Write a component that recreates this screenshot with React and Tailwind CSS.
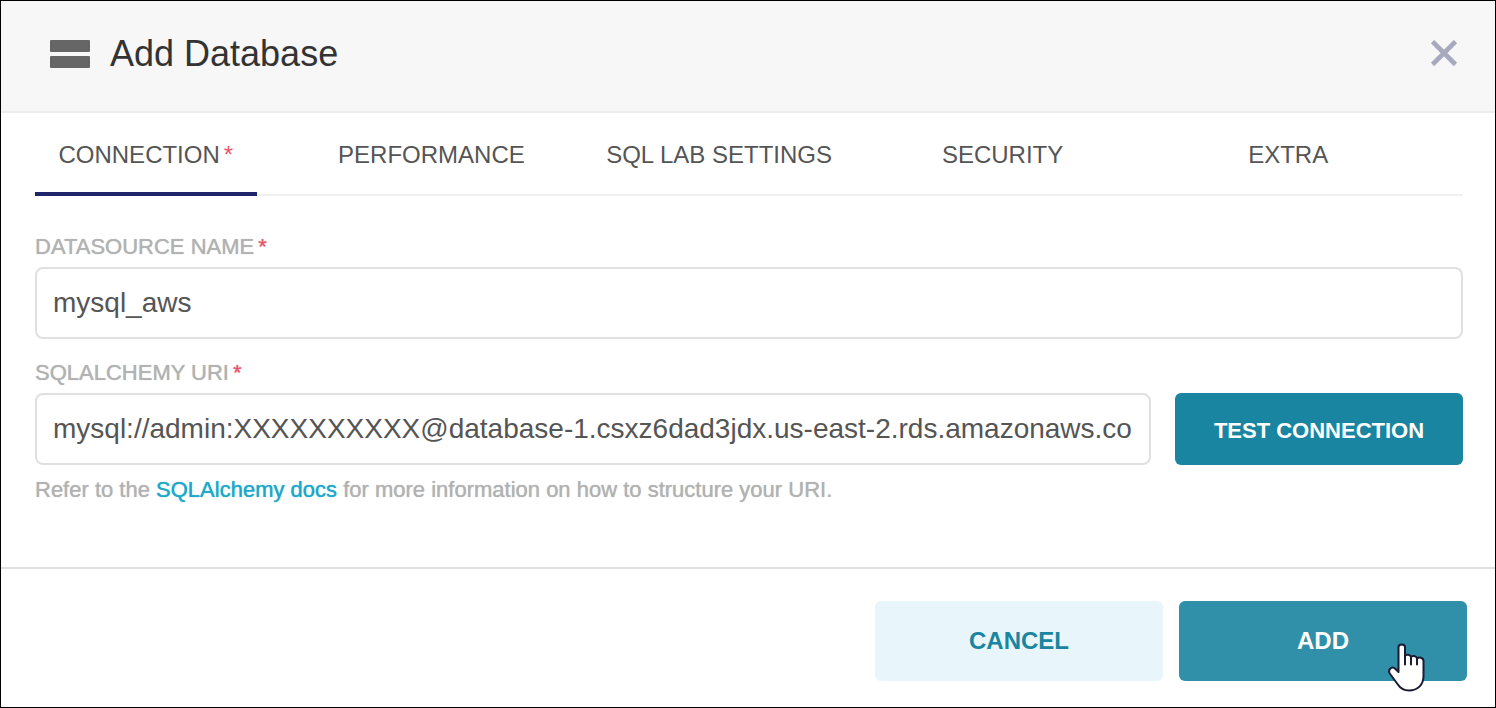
import { useState } from "react";

const TABS = [
  { id: "connection", label: "CONNECTION", required: true },
  { id: "performance", label: "PERFORMANCE" },
  { id: "sqllab", label: "SQL LAB SETTINGS" },
  { id: "security", label: "SECURITY" },
  { id: "extra", label: "EXTRA" },
];

// --- Icons ---
function DatabaseIcon() {
  return (
    <svg width="40" height="28" viewBox="0 0 40 28" fill="#666666" aria-hidden="true">
      <rect width="40" height="12" rx="1" />
      <rect y="16" width="40" height="12" rx="1" />
    </svg>
  );
}

function CloseIcon() {
  return (
    <svg width="28" height="28" viewBox="0 0 28 28" stroke="#a7a9be" strokeWidth="4.6" aria-hidden="true">
      <path d="M2.5 1.5 L25.5 24.5 M25.5 1.5 L2.5 24.5" />
    </svg>
  );
}

function HandPointer() {
  return (
    <svg
      className="pointer-events-none absolute top-[42px] right-[42px]"
      width="37"
      height="49"
      viewBox="0 0 37 49"
      fill="#ffffff"
      stroke="#1b1b33"
      strokeWidth="2"
      strokeLinecap="round"
      strokeLinejoin="round"
      aria-hidden="true"
    >
      <path d="M10.5 29 V4 C10.5 0.5 17 0.5 17 4 V13 C18 11 22.5 11.5 23 14 C24.500 12 28.500 13 29 15.500 C31 13.500 35.500 14.500 35.500 18 V33 C35.500 42 29.500 47.500 21 47.500 C15.500 47.500 12 45 9.500 41 L1.800 30.500 C-0.500 26.500 4 22.500 7.500 26 Z" />
      <path d="M17 13 V21.500 M23 14 V21.500 M29 15.500 V21.500" fill="none" />
    </svg>
  );
}

// --- Form pieces ---
function Required() {
  return <span className="ml-1 text-[#e8576c]">*</span>;
}

function FieldLabel({ htmlFor, children }) {
  return (
    <label
      htmlFor={htmlFor}
      className="mb-2 block text-[22px] leading-6 text-[#b2b2b2] [text-shadow:0_0_1px_currentColor]"
    >
      {children}
      <Required />
    </label>
  );
}

function TextField({ id, value, onChange }) {
  return (
    <input
      id={id}
      type="text"
      value={value}
      onChange={(e) => onChange(e.target.value)}
      className="h-[72px] w-full min-w-0 rounded-lg border-2 border-[#e0e0e0] bg-white px-4 text-[28px] text-[#555555] outline-none"
    />
  );
}

// --- Main App ---
export default function App() {
  const [activeTab, setActiveTab] = useState("connection");
  const [name, setName] = useState("mysql_aws");
  const [uri, setUri] = useState(
    "mysql://admin:XXXXXXXXXX@database-1.csxz6dad3jdx.us-east-2.rds.amazonaws.co"
  );

  return (
    <div
      role="dialog"
      aria-labelledby="dialog-title"
      className="border border-black bg-white font-['Liberation_Sans',Arial,sans-serif]"
    >
      {/* Header */}
      <header className="flex items-center justify-between border-b-2 border-[#ededed] bg-[#f7f7f7] pt-[33px] pr-[37px] pb-[37px] pl-[49px]">
        <div className="flex items-center gap-5">
          <DatabaseIcon />
          <h1 id="dialog-title" className="text-4xl leading-10 text-[#333333]">
            Add Database
          </h1>
        </div>
        <button type="button" aria-label="Close">
          <CloseIcon />
        </button>
      </header>

      {/* Tabs */}
      <div className="pr-8 pl-[34px]">
        <div role="tablist" className="grid h-[83px] grid-cols-5 border-b-2 border-[#f0f0f0]">
          {TABS.map((tab) => (
            <button
              key={tab.id}
              type="button"
              role="tab"
              aria-selected={activeTab === tab.id}
              onClick={() => setActiveTab(tab.id)}
              className={`-mb-[2px] mr-16 border-b-4 pt-1 text-2xl whitespace-nowrap text-[#555555] ${
                activeTab === tab.id ? "border-[#20256b]" : "border-transparent"
              }`}
            >
              {tab.label}
              {tab.required && <Required />}
            </button>
          ))}
        </div>
      </div>

      {/* Connection form */}
      <div className="pt-[39px] pr-8 pb-[65px] pl-[34px]">
        <FieldLabel htmlFor="datasource-name">DATASOURCE NAME</FieldLabel>
        <TextField id="datasource-name" value={name} onChange={setName} />

        <div className="mt-[22px]">
          <FieldLabel htmlFor="sqlalchemy-uri">SQLALCHEMY URI</FieldLabel>
          <div className="flex gap-6">
            <TextField id="sqlalchemy-uri" value={uri} onChange={setUri} />
            <button
              type="button"
              className="w-72 shrink-0 rounded-md bg-[#1a85a0] pt-[2px] text-[22px] font-bold text-white"
            >
              TEST CONNECTION
            </button>
          </div>
        </div>
        <p className="mt-[13px] text-[22px] leading-6 text-[#b2b2b2] [text-shadow:0_0_1px_currentColor]">
          Refer to the{" "}
          <a href="#docs" className="text-[#20a7c9] [text-shadow:0_0_1px_currentColor]">
            SQLAlchemy docs
          </a>{" "}
          for more information on how to structure your URI.
        </p>
      </div>

      {/* Footer */}
      <footer className="flex justify-end gap-4 border-t-2 border-[#e0e0e0] pt-8 pr-7 pb-[26px]">
        <button type="button" className="h-20 w-72 rounded-md bg-[#e8f5fa] text-2xl font-bold text-[#1a85a0]">
          CANCEL
        </button>
        <button type="button" className="relative h-20 w-72 rounded-md bg-[#3190a9] text-2xl font-bold text-white">
          ADD
          <HandPointer />
        </button>
      </footer>
    </div>
  );
}
